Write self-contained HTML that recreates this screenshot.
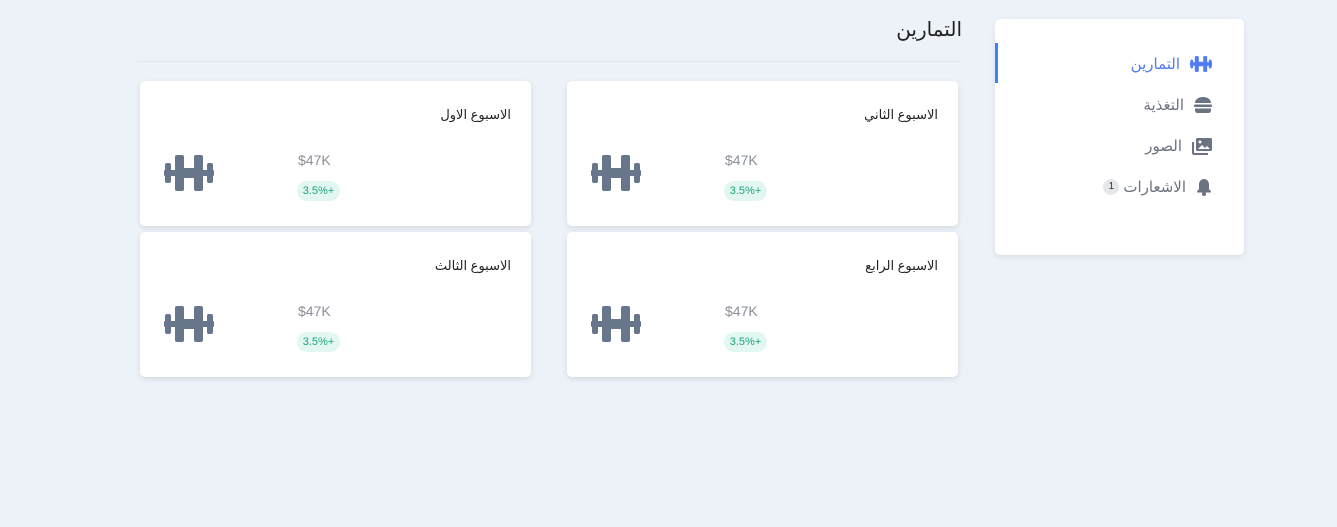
<!DOCTYPE html>
<html lang="ar" dir="rtl"><head><meta charset="utf-8"><style>
*{box-sizing:border-box;margin:0;padding:0}
body{width:1337px;height:527px;background:#edf1f8;font-family:"Liberation Sans","DejaVu Sans",sans-serif;position:relative;overflow:hidden}
.abs{position:absolute}
.side{left:995px;top:19px;width:249px;height:236px;background:#fff;border-radius:5px;box-shadow:0 2px 6px rgba(0,0,0,.08)}
.item{position:absolute;right:32px;display:flex;align-items:center;gap:10px;font-size:15px;color:#6b7280;direction:rtl}
.item svg{flex:none}
.bar{position:absolute;left:0;top:24px;width:3px;height:40px;background:#3b82f6}
.card{width:391px;height:145px;background:#fff;border-radius:5px;box-shadow:0 2px 6px rgba(0,0,0,.1)}
.ct{position:absolute;right:20px;top:26px;font-size:13px;color:#222}
.val{position:absolute;left:158px;top:71px;font-size:14px;color:#8a8f98;direction:ltr}
.pill{position:absolute;left:157px;top:100px;width:43px;height:20px;border-radius:10px;background:#e3f7f2;color:#1aa67a;font-size:11px;line-height:20px;text-align:center;direction:ltr}
.db{position:absolute;left:24px;top:74px}
.badge{display:inline-block;width:16px;height:16px;border-radius:8px;background:#e5e7eb;font-size:10px;line-height:16px;text-align:center;color:#333}
</style></head><body>
<div class="abs" style="right:375px;top:17px;font-size:20px;color:#222">التمارين</div>
<div class="abs" style="left:137px;top:61px;width:825px;height:1px;background:#e3e7ee"></div>

<div class="abs side">
<div class="bar"></div>
<div class="item" style="top:36px;color:#4f7cf6">
<svg width="22" height="16" viewBox="0 0 50 36"><g fill="#4f7cf6"><rect x="0" y="14" width="50" height="8"/><rect x="1" y="8" width="6" height="20" rx="2"/><rect x="43" y="8" width="6" height="20" rx="2"/><rect x="11" y="0" width="9" height="36" rx="2"/><rect x="30" y="0" width="9" height="36" rx="2"/><rect x="18" y="13" width="14" height="10"/></g></svg>
<span>التمارين</span></div>
<div class="item" style="top:77px">
<svg width="18" height="16" viewBox="0 0 18 16"><g fill="#6b7280"><path d="M1 6C1 2 5 0 9 0s8 2 8 6z"/><rect x="0" y="7.5" width="18" height="2.5" rx="1"/><path d="M1 11.5h16v1.5c0 2-1 3-3 3H4c-2 0-3-1-3-3z"/></g></svg>
<span>التغذية</span></div>
<div class="item" style="top:118px">
<svg width="20" height="17" viewBox="0 0 20 17"><g fill="#6b7280"><path d="M0 4h2v11h14v2H2c-1 0-2-1-2-2z"/><rect x="4" y="0" width="16" height="13" rx="1.5"/></g><path d="M6 11l4-4 3 3 2-2 3 3z" fill="#fff"/><circle cx="8" cy="4" r="1.5" fill="#fff"/></svg>
<span>الصور</span></div>
<div class="item" style="top:159px">
<svg width="16" height="18" viewBox="0 0 16 18"><g fill="#6b7280"><path d="M8 1c3 0 5 2.5 5 5.5V11l2 2.5v1H1v-1L3 11V6.5C3 3.5 5 1 8 1z"/><circle cx="8" cy="16" r="2"/></g></svg>
<span>الاشعارات</span><span class="badge" style="margin-right:-6px">1</span></div>
</div>

<div class="abs card" style="left:567px;top:81px"><div class="ct">الاسبوع الثاني</div>
<svg class="db" width="50" height="36" viewBox="0 0 50 36"><g fill="#67768a"><rect x="0" y="15" width="50" height="6" rx="1"/><rect x="1" y="8" width="6" height="20" rx="2"/><rect x="43" y="8" width="6" height="20" rx="2"/><rect x="11" y="0" width="9" height="36" rx="2"/><rect x="30" y="0" width="9" height="36" rx="2"/><rect x="18" y="13" width="14" height="10"/></g></svg>
<div class="val">$47K</div><div class="pill">3.5%+</div></div>
<div class="abs card" style="left:140px;top:81px"><div class="ct">الاسبوع الاول</div>
<svg class="db" width="50" height="36" viewBox="0 0 50 36"><g fill="#67768a"><rect x="0" y="15" width="50" height="6" rx="1"/><rect x="1" y="8" width="6" height="20" rx="2"/><rect x="43" y="8" width="6" height="20" rx="2"/><rect x="11" y="0" width="9" height="36" rx="2"/><rect x="30" y="0" width="9" height="36" rx="2"/><rect x="18" y="13" width="14" height="10"/></g></svg>
<div class="val">$47K</div><div class="pill">3.5%+</div></div>
<div class="abs card" style="left:567px;top:232px"><div class="ct">الاسبوع الرابع</div>
<svg class="db" width="50" height="36" viewBox="0 0 50 36"><g fill="#67768a"><rect x="0" y="15" width="50" height="6" rx="1"/><rect x="1" y="8" width="6" height="20" rx="2"/><rect x="43" y="8" width="6" height="20" rx="2"/><rect x="11" y="0" width="9" height="36" rx="2"/><rect x="30" y="0" width="9" height="36" rx="2"/><rect x="18" y="13" width="14" height="10"/></g></svg>
<div class="val">$47K</div><div class="pill">3.5%+</div></div>
<div class="abs card" style="left:140px;top:232px"><div class="ct">الاسبوع الثالث</div>
<svg class="db" width="50" height="36" viewBox="0 0 50 36"><g fill="#67768a"><rect x="0" y="15" width="50" height="6" rx="1"/><rect x="1" y="8" width="6" height="20" rx="2"/><rect x="43" y="8" width="6" height="20" rx="2"/><rect x="11" y="0" width="9" height="36" rx="2"/><rect x="30" y="0" width="9" height="36" rx="2"/><rect x="18" y="13" width="14" height="10"/></g></svg>
<div class="val">$47K</div><div class="pill">3.5%+</div></div>
</body></html>
